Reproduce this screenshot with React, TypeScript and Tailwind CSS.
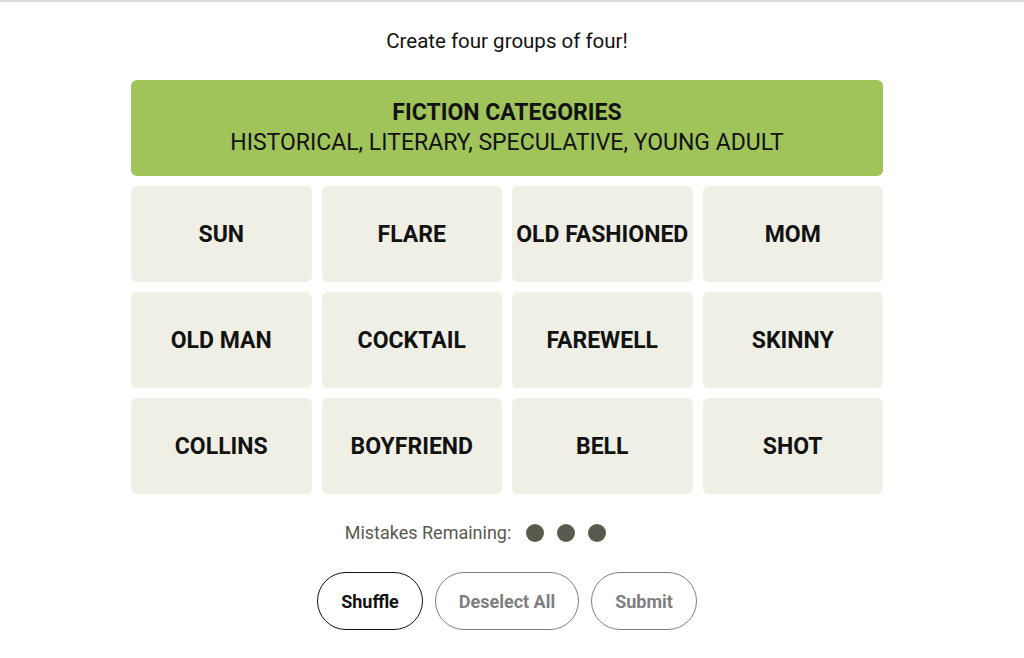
const rows = [
  ["SUN", "FLARE", "OLD FASHIONED", "MOM"],
  ["OLD MAN", "COCKTAIL", "FAREWELL", "SKINNY"],
  ["COLLINS", "BOYFRIEND", "BELL", "SHOT"],
];

export default function App() {
  return (
    <div className="min-h-[658px] bg-white border-t-2 border-[#dcdcdc] pr-[10px] flex flex-col items-center text-[#121212]" style={{ fontFamily: 'Roboto, "Liberation Sans", sans-serif' }}>
      <p className="mt-[27px] text-[20.5px] leading-6">Create four groups of four!</p>

      <div className="mt-[27px] w-[752px] flex flex-col gap-[10px]">
        <div className="h-[96px] rounded-md bg-[#a0c35a] flex flex-col items-center justify-center">
          <div className="text-[23px] font-bold leading-[30px]">FICTION CATEGORIES</div>
          <div className="text-[23px] leading-[30px]">HISTORICAL, LITERARY, SPECULATIVE, YOUNG ADULT</div>
        </div>
        {rows.map((row, i) => (
          <div key={i} className="grid grid-cols-4 gap-[10px]">
            {row.map((w) => (
              <div key={w} className="h-[96px] pt-[3px] rounded-md bg-[#efefe6] flex items-center justify-center text-[23px] font-bold whitespace-nowrap">
                {w}
              </div>
            ))}
          </div>
        ))}
      </div>

      <div className="mt-[25px] mr-[63px] flex items-center text-[18px] text-[#5a594e]">
        <span>Mistakes Remaining:</span>
        <div className="ml-[15px] flex gap-[13px]">
          <span className="w-[18px] h-[18px] rounded-full bg-[#5a594e]" />
          <span className="w-[18px] h-[18px] rounded-full bg-[#5a594e]" />
          <span className="w-[18px] h-[18px] rounded-full bg-[#5a594e]" />
        </div>
      </div>

      <div className="mt-[26px] flex gap-[12px]">
        <button className="h-[58px] w-[106px] rounded-full border border-[#121212] text-[18px] font-bold text-[#121212]">Shuffle</button>
        <button className="h-[58px] w-[144px] rounded-full border border-[#7f7f7f] text-[18px] font-bold text-[#7f7f7f]">Deselect All</button>
        <button className="h-[58px] w-[106px] rounded-full border border-[#7f7f7f] text-[18px] font-bold text-[#7f7f7f]">Submit</button>
      </div>
    </div>
  );
}
